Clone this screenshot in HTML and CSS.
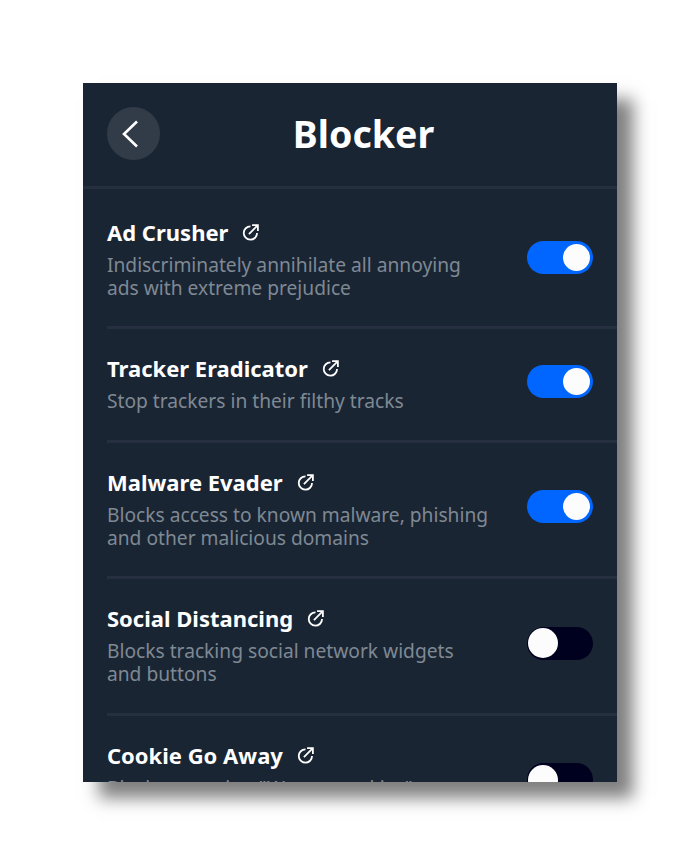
FILE: index.html
```html
<!DOCTYPE html>
<html lang="en">
<head>
    <meta charset="UTF-8">
    <meta name="viewport" content="width=device-width, initial-scale=1.0">
    <title>Blocker</title>
    <link rel="stylesheet" href="styles.css">
</head>
<body>
    <div class="panel">
        <div class="header">
            <div class="back">
                <svg class="chevron" width="18" height="28" viewBox="0 0 18 28"><path d="M16 1.5 L3 14 L16 26.5" fill="none" stroke="#fff" stroke-width="2.6"/></svg>
            </div>
            <h1>Blocker</h1>
        </div>

        <div class="row">
            <div class="info">
                <div class="name">Ad Crusher
                    <svg class="link" width="19" height="19" viewBox="0 0 18 18"><path d="M9 3.2 A6.3 6.3 0 1 0 15.2 9.5 M7.5 10.5 L15.5 2.5 M10.5 2 H16 V7.5" fill="none" stroke="#fff" stroke-width="1.7"/></svg>
                </div>
                <div class="desc">Indiscriminately annihilate all annoying<br>ads with extreme prejudice</div>
            </div>
            <div class="toggle on"><span class="knob"></span></div>
        </div>

        <div class="row">
            <div class="info">
                <div class="name">Tracker Eradicator
                    <svg class="link" width="19" height="19" viewBox="0 0 18 18"><path d="M9 3.2 A6.3 6.3 0 1 0 15.2 9.5 M7.5 10.5 L15.5 2.5 M10.5 2 H16 V7.5" fill="none" stroke="#fff" stroke-width="1.7"/></svg>
                </div>
                <div class="desc">Stop trackers in their filthy tracks</div>
            </div>
            <div class="toggle on"><span class="knob"></span></div>
        </div>

        <div class="row">
            <div class="info">
                <div class="name">Malware Evader
                    <svg class="link" width="19" height="19" viewBox="0 0 18 18"><path d="M9 3.2 A6.3 6.3 0 1 0 15.2 9.5 M7.5 10.5 L15.5 2.5 M10.5 2 H16 V7.5" fill="none" stroke="#fff" stroke-width="1.7"/></svg>
                </div>
                <div class="desc">Blocks access to known malware, phishing<br>and other malicious domains</div>
            </div>
            <div class="toggle on"><span class="knob"></span></div>
        </div>

        <div class="row">
            <div class="info">
                <div class="name">Social Distancing
                    <svg class="link" width="19" height="19" viewBox="0 0 18 18"><path d="M9 3.2 A6.3 6.3 0 1 0 15.2 9.5 M7.5 10.5 L15.5 2.5 M10.5 2 H16 V7.5" fill="none" stroke="#fff" stroke-width="1.7"/></svg>
                </div>
                <div class="desc">Blocks tracking social network widgets<br>and buttons</div>
            </div>
            <div class="toggle"><span class="knob"></span></div>
        </div>

        <div class="row">
            <div class="info">
                <div class="name">Cookie Go Away
                    <svg class="link" width="19" height="19" viewBox="0 0 18 18"><path d="M9 3.2 A6.3 6.3 0 1 0 15.2 9.5 M7.5 10.5 L15.5 2.5 M10.5 2 H16 V7.5" fill="none" stroke="#fff" stroke-width="1.7"/></svg>
                </div>
                <div class="desc">Blocks annoying "We use cookies"<br>popups</div>
            </div>
            <div class="toggle"><span class="knob"></span></div>
        </div>
    </div>
</body>
</html>
```

FILE: styles.css
```css
body {
    font-family: "Noto Sans", "Open Sans", sans-serif;
    background-color: #fff;
    margin: 0;
    padding: 83px;
}

.panel {
    width: 534px;
    height: 699px;
    overflow: hidden;
    background-color: #1a2533;
    box-shadow: 16px 16px 16px rgba(0, 0, 0, 0.5);
}

/* Header */
.header {
    display: flex;
    align-items: center;
    padding: 24px 24px 26px;
    border-bottom: 3px solid #262f3f;
}

.back {
    display: flex;
    align-items: center;
    justify-content: center;
    flex: none;
    width: 53px;
    height: 53px;
    border-radius: 50%;
    background-color: #323c49;
}

.chevron {
    margin-right: 7px;
}

h1 {
    flex: 1;
    margin: 0 26px 0 0;
    text-align: center;
    color: #fff;
    font-size: 37.5px;
    font-weight: 700;
    line-height: 46px;
}

/* Rows */
.row {
    display: flex;
    align-items: center;
    justify-content: space-between;
    margin-left: 24px;
    padding: 24px 24px 27.5px 0;
    border-bottom: 3px solid #262f3f;
}

.header + .row {
    padding-top: 28px;
    padding-bottom: 27px;
}

.name {
    display: flex;
    align-items: center;
    gap: 13px;
    color: #fff;
    font-size: 22px;
    font-weight: 700;
    line-height: 30px;
}

.link {
    margin-top: 1px;
}

.desc {
    color: #7f8993;
    font-size: 19.2px;
    line-height: 23px;
    margin-top: 6px;
}

/* Toggles */
.toggle {
    display: flex;
    align-items: center;
    justify-content: flex-start;
    flex: none;
    width: 66px;
    height: 33px;
    margin-bottom: 2px;
    border-radius: 17px;
    background-color: #00001f;
}

.toggle.on {
    justify-content: flex-end;
    background-color: #0066ff;
}

.knob {
    width: 30px;
    height: 30px;
    margin: 0 1px;
    border-radius: 50%;
    background-color: #fcfcfd;
}

.toggle.on .knob {
    width: 27px;
    height: 27px;
    margin: 0 3px;
}
```
